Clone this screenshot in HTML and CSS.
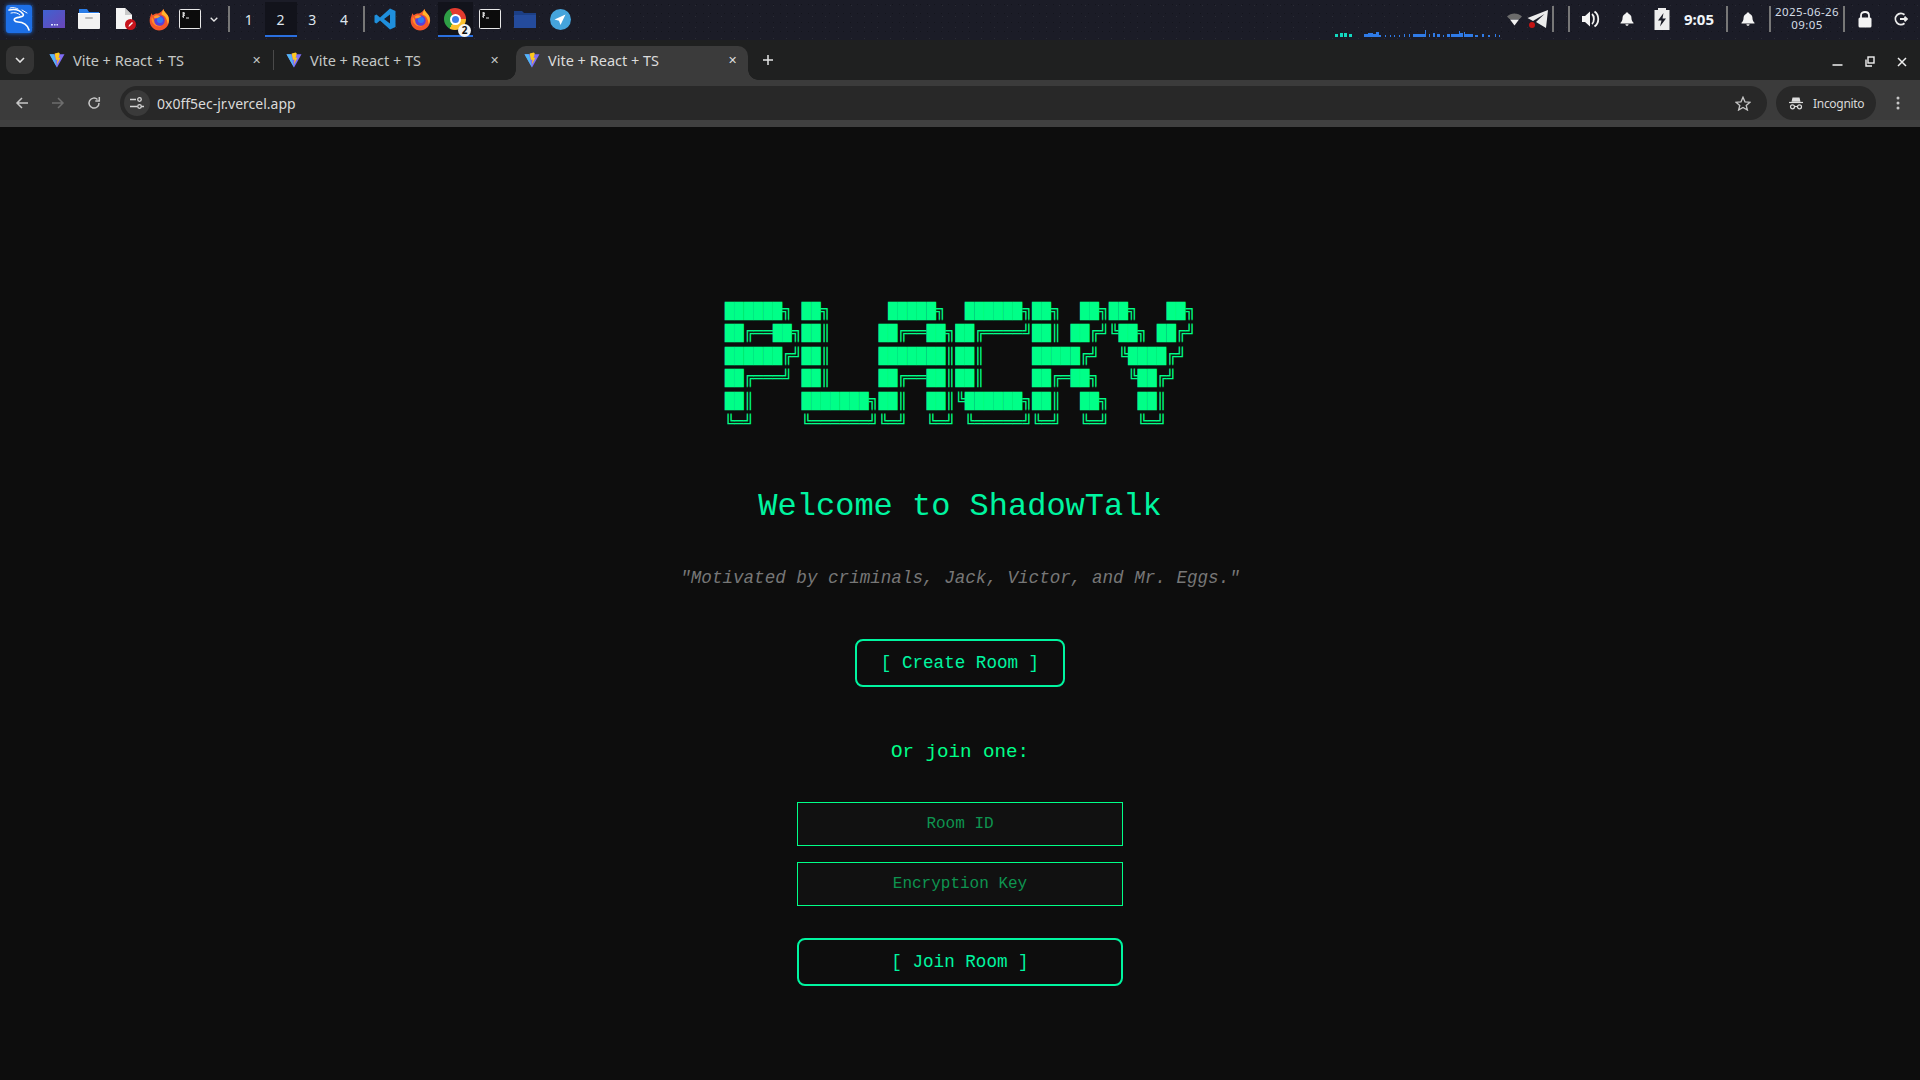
FILE: index.html
```html
<!DOCTYPE html>
<html lang="en">
<head>
    <meta charset="UTF-8">
    <meta name="viewport" content="width=device-width, initial-scale=1.0">
    <title>Vite + React + TS</title>
    <link rel="stylesheet" href="styles.css">
</head>
<body>
    <svg class="sprites" width="0" height="0">
        <symbol id="vite" viewBox="0 0 16 16">
            <path d="M0.5 2.2 L15.5 2.2 L8 15.5 Z" fill="#7f6cf6"/>
            <path d="M0.5 2.2 L5 2.2 L8 15.5 Z" fill="#4fb8f5"/>
            <path d="M9.8 0.5 L5.6 1.6 L7 8 L8.6 7.6 L7.8 12.6 L11.6 5.6 L9.6 6 L10.8 1.6 Z" fill="#fdc81e"/>
        </symbol>
        <symbol id="firefox" viewBox="0 0 22 24">
            <path d="M15 1 C15.5 4 18 5 19.5 7.5 C22 11 21.5 17 18 20.5 C14 24.5 7 24.5 3.500 20.500 C0.500 17 0 12.500 1.500 8.500 L2.500 5.500 L4 7.500 C5.500 6 7.500 5.500 9.500 5.800 C11.500 4.500 14 3.500 15 1 Z" fill="#f5562a"/>
            <path d="M15 1 C15.500 4 18 5 19.500 7.500 C21.500 11 21 15 19.500 17 C19.500 12 17 8 13 6.500 C13.500 4.500 14.500 3 15 1 Z" fill="#ffb52c"/>
            <path d="M3 9 C2 12 3 15 5 17 C7 19 10 20 13 19 C10 19 8 17 6.500 15 Z" fill="#ff8a2a"/>
            <circle cx="11" cy="13" r="5.500" fill="#5a40d8"/>
            <circle cx="11.500" cy="12.500" r="3.200" fill="#2f7bf0"/>
            <path d="M5 9 C7 7 10 7 12 8.500 L9 10.500 L6 11 Z" fill="#ff9a30"/>
        </symbol>
        <symbol id="term" viewBox="0 0 22 20">
            <rect x="0.500" y="0.500" width="21" height="19" rx="1" fill="#0c0c0c" stroke="#e8e8e8"/>
            <path d="M3 4 L6 4 L3.500 6 L6 6 L3 8 M4.500 3 L4.500 9" fill="none" stroke="#e8e8e8" stroke-width="0.800"/>
            <path d="M7 9 L10 9" stroke="#e8e8e8"/>
        </symbol>
        <symbol id="bell" viewBox="0 0 14 14">
            <path d="M7 0.500 C8 0.500 8.400 1 8.500 1.800 C10.500 2.500 11.500 4 11.500 6.500 C11.500 8.500 12.500 9.800 13.500 10.800 L13.500 11.500 L0.500 11.500 L0.500 10.800 C1.500 9.800 2.500 8.500 2.500 6.500 C2.500 4 3.500 2.500 5.500 1.800 C5.600 1 6 0.500 7 0.500 Z M5.400 12.300 L8.600 12.300 C8.400 13.300 7.800 13.800 7 13.800 C6.200 13.800 5.600 13.300 5.400 12.300 Z" fill="#f4f4f4"/>
        </symbol>
    </svg>

    <header class="taskbar">
        <div class="task-group task-apps">
            <div class="kali-btn">
                <svg width="24" height="26" viewBox="0 0 24 26" fill="none" stroke="#fff" stroke-linecap="round">
                    <path d="M2 4 C7 3 13 4 16 8 C18 11 12 11 9 12 C6 13 7 16 11 16 C16 16 21 19 22 24" stroke-width="1.600"/>
                    <path d="M4 7 C8 6 11 7 13 9 M3 2 C6 1 9 2 11 3 M15 4 L20 7" stroke-width="1"/>
                </svg>
            </div>
            <svg class="app-panel" width="22" height="18" viewBox="0 0 22 18">
                <defs><linearGradient id="pg" x1="0" y1="0" x2="1" y2="1"><stop offset="0" stop-color="#3f62d0"/><stop offset="1" stop-color="#6a45b8"/></linearGradient></defs>
                <rect width="22" height="18" fill="url(#pg)"/>
                <path d="M8 14h2v1.500h-2zM11 14h1.500v1.500h-1.500zM13.500 14h1.500v1.500h-1.500z" fill="#dfe6ff"/>
            </svg>
            <svg class="app-files" width="22" height="20" viewBox="0 0 22 20">
                <path d="M1 0 H9 L11 3 H21 V8 H1 Z" fill="#2a7de8"/>
                <rect x="0" y="4" width="22" height="16" rx="1" fill="#f2f2f2"/>
                <rect x="7" y="8" width="8" height="2" rx="1" fill="#b8b8b8"/>
                <path d="M0 4 H22 L22 5 H0 Z" fill="#fff"/>
            </svg>
            <svg class="app-doc" width="22" height="24" viewBox="0 0 22 24">
                <path d="M1 1 H10 L17 8 V22 H1 Z" fill="#f5f5f5"/>
                <path d="M10 1 L17 8 H10 Z" fill="#c9c9c9"/>
                <circle cx="15.500" cy="17.500" r="5.500" fill="#c8141c"/>
                <path d="M13.500 20 L14 18 L17 15 L18 16 L15 19 Z" fill="#fff"/>
            </svg>
            <svg class="app-fox" width="21" height="23"><use href="#firefox"/></svg>
            <svg class="app-term" width="22" height="20"><use href="#term"/></svg>
            <svg class="app-chevron" width="8" height="5" viewBox="0 0 8 5"><path d="M0.700 0.700 L4 4 L7.300 0.700" fill="none" stroke="#e6e6e6" stroke-width="1.300"/></svg>
            <span class="bar-sep"></span>
        </div>

        <div class="workspaces">
            <span class="ws">1</span>
            <span class="ws ws-active">2</span>
            <span class="ws">3</span>
            <span class="ws">4</span>
        </div>
        <span class="bar-sep sep-mid"></span>

        <div class="task-group task-running">
            <svg class="run-code" width="22" height="22" viewBox="0 0 22 22">
                <path d="M16 0.500 L21.500 3 V19 L16 21.500 L6 12.500 L2.500 15.500 L0.500 14.500 V7.500 L2.500 6.500 L6 9.500 Z M16 6.500 L10 11 L16 15.500 Z" fill="#1f8fdc" fill-rule="evenodd"/>
            </svg>
            <svg class="run-fox" width="21" height="23"><use href="#firefox"/></svg>
            <div class="run-chrome">
                <div class="chrome-logo"><div class="chrome-dot"></div></div>
                <span class="chrome-count">2</span>
            </div>
            <svg class="run-term" width="22" height="20"><use href="#term"/></svg>
            <svg class="run-folder" width="22" height="18" viewBox="0 0 22 18">
                <path d="M0 1 H8 L10 3 H22 V18 H0 Z" fill="#1c3f85"/>
                <path d="M0 5 H22 V18 H0 Z" fill="#244b9c"/>
            </svg>
            <svg class="run-tg" width="21" height="21" viewBox="0 0 21 21">
                <circle cx="10.500" cy="10.500" r="10.500" fill="#45a4dc"/>
                <path d="M15.500 5.500 L4.500 10.500 L9 11.800 L10.500 16 Z" fill="#fff"/>
            </svg>
        </div>

        <svg class="net-graph" width="190" height="8" viewBox="0 0 190 8">
            <path d="M0 5h3v3h-3zM5 4h3v4h-3zM9 4h3v4h-3zM14 5h3v3h-3z" fill="#12d8c0"/>
            <path d="M29 5h4v3h-4zM33 4h5v4h-5zM38 5h3v3h-3zM41 3h3v5h-3zM44 6h2v2h-2zM50 6h1v2h-1zM55 6h1v2h-1zM59 6h1v2h-1zM64 6h1v2h-1zM69 5h1v3h-1zM74 5h1v3h-1zM78 5h12v3h-12zM90 1h1v7h-1zM94 5h1v3h-1zM98 4h2v4h-2zM102 5h3v3h-3zM108 6h1v2h-1zM112 5h3v3h-3zM116 5h8v3h-8zM124 2h1v6h-1zM125 4h3v4h-3zM129 3h1v5h-1zM130 5h8v3h-8zM140 6h3v2h-3zM147 5h2v3h-2zM153 6h2v2h-2zM160 5h1v3h-1zM164 6h1v2h-1z" fill="#2f7be8"/>
        </svg>

        <div class="tray">
            <svg class="tray-wifi" width="15" height="13" viewBox="0 0 15 13">
                <path d="M0 3.500 C4 -0.500 11 -0.500 15 3.500 L12.500 6 H2.500 Z" fill="#6b6b6b"/>
                <path d="M3 6.500 H12 L7.500 12.500 Z" fill="#f2f2f2"/>
            </svg>
            <svg class="tray-tg" width="22" height="20" viewBox="0 0 22 20">
                <path d="M21 1 L0.500 9 L6 12 L17.500 5 L9 13 L19 19 Z" fill="#ececec"/>
                <circle cx="5" cy="16" r="3" fill="#c41414"/>
            </svg>
            <span class="bar-sep tray-sep-a"></span>
            <span class="bar-sep tray-sep-b"></span>
            <svg class="tray-vol" width="18" height="18" viewBox="0 0 18 18">
                <path d="M0 6 H3 L8 1.500 V16.500 L3 12 H0 Z" fill="#f4f4f4"/>
                <path d="M10 4 C12.500 6 12.500 12 10 14 M12.500 1.500 C17.500 5 17.500 13 12.500 16.500" fill="none" stroke="#f4f4f4" stroke-width="1.800"/>
            </svg>
            <svg class="tray-bell-a" width="14" height="14"><use href="#bell"/></svg>
            <svg class="tray-bat" width="16" height="22" viewBox="0 0 16 22">
                <path d="M4 0 H12 V2 H15.500 V22 H0.500 V2 H4 Z M9.500 5 L4 12.500 H7.500 L6 18.500 L12 10.500 H8.500 Z" fill="#ededed" fill-rule="evenodd"/>
            </svg>
            <span class="tray-time">9:05</span>
            <span class="bar-sep tray-sep-c"></span>
            <svg class="tray-bell-b" width="14" height="14"><use href="#bell"/></svg>
            <span class="bar-sep tray-sep-d"></span>
            <div class="tray-date"><span>2025-06-26</span><span>09:05</span></div>
            <span class="bar-sep tray-sep-e"></span>
            <svg class="tray-lock" width="14" height="17" viewBox="0 0 14 17">
                <path d="M3 7 V4.500 C3 2 4.800 1 7 1 C9.200 1 11 2 11 4.500 V7" fill="none" stroke="#f4f4f4" stroke-width="1.800"/>
                <rect x="0.500" y="6.500" width="13" height="10" rx="1.500" fill="#f4f4f4"/>
            </svg>
            <svg class="tray-power" width="14" height="14" viewBox="0 0 14 14" fill="none" stroke="#ececec" stroke-width="1.800">
                <path d="M10.500 2.800 A5.500 5.500 0 1 0 10.500 11.200"/>
                <path d="M6 7 H13 M10.500 4.800 L13 7 L10.500 9.200"/>
            </svg>
        </div>
    </header>

    <div class="tabstrip">
        <button class="tab-search">
            <svg width="10" height="6" viewBox="0 0 10 6"><path d="M1 1 L5 5 L9 1" fill="none" stroke="#e3e3e3" stroke-width="1.600"/></svg>
        </button>
        <div class="tab tab-first">
            <svg class="favicon" width="16" height="16"><use href="#vite"/></svg>
            <span class="tab-title">Vite + React + TS</span>
            <span class="tab-close">&#x2715;</span>
        </div>
        <span class="tab-sep"></span>
        <div class="tab">
            <svg class="favicon" width="16" height="16"><use href="#vite"/></svg>
            <span class="tab-title">Vite + React + TS</span>
            <span class="tab-close">&#x2715;</span>
        </div>
        <div class="tab tab-active">
            <svg class="favicon" width="16" height="16"><use href="#vite"/></svg>
            <span class="tab-title">Vite + React + TS</span>
            <span class="tab-close">&#x2715;</span>
        </div>
        <svg class="tab-new" width="12" height="12" viewBox="0 0 12 12"><path d="M6 1 V11 M1 6 H11" stroke="#e3e3e3" stroke-width="1.500"/></svg>
        <div class="win-controls">
            <svg width="11" height="11" viewBox="0 0 11 11"><path d="M0.500 9 H10.500" stroke="#f0f0f0" stroke-width="1.500"/></svg>
            <svg width="10" height="11" viewBox="0 0 10 11" fill="none" stroke="#f0f0f0" stroke-width="1.400"><rect x="3" y="1" width="6" height="6"/><path d="M1 3.500 V10 H7"/></svg>
            <svg width="10" height="10" viewBox="0 0 10 10"><path d="M1 1 L9 9 M9 1 L1 9" stroke="#f0f0f0" stroke-width="1.500"/></svg>
        </div>
    </div>

    <div class="toolbar">
        <svg class="nav-icon" width="14" height="14" viewBox="0 0 14 14" fill="none" stroke="#c7c7c7" stroke-width="1.500"><path d="M13 7 H2 M7 2 L2 7 L7 12"/></svg>
        <svg class="nav-icon nav-off" width="14" height="14" viewBox="0 0 14 14" fill="none" stroke="#6e6e6e" stroke-width="1.500"><path d="M1 7 H12 M7 2 L12 7 L7 12"/></svg>
        <svg class="nav-icon" width="14" height="14" viewBox="0 0 14 14" fill="none" stroke="#c7c7c7" stroke-width="1.500"><path d="M12 7 A5 5 0 1 1 10.500 3.500"/><path d="M12.300 1 V5 H8.300"/></svg>
        <div class="omnibox">
            <span class="site-info">
                <svg width="14" height="12" viewBox="0 0 14 12" fill="none" stroke="#d5d5d5" stroke-width="1.300"><path d="M0 2.500 H6 M11 9.500 H14 M0 9.500 H7"/><circle cx="9.500" cy="2.500" r="1.800"/><circle cx="9.500" cy="9.500" r="1.800"/></svg>
            </span>
            <span class="url">0x0ff5ec-jr.vercel.app</span>
            <svg class="star" width="16" height="15" viewBox="0 0 16 15"><path d="M8 1.200 L10 5.800 L15 6.200 L11.200 9.500 L12.400 14 L8 11.500 L3.600 14 L4.800 9.500 L1 6.200 L6 5.800 Z" fill="none" stroke="#c7c7c7" stroke-width="1.300"/></svg>
        </div>
        <div class="incognito">
            <svg width="14" height="14" viewBox="0 0 14 14" fill="none" stroke="#dcdcdc" stroke-width="1.200"><path d="M3.500 1.500 H10.500 L11.500 5.800 H2.500 Z" fill="#dcdcdc" stroke="none"/><path d="M0 6.500 H14"/><circle cx="3.500" cy="10.800" r="2"/><circle cx="10.500" cy="10.800" r="2"/><path d="M5.500 10.500 H8.500"/></svg>
            <span>Incognito</span>
        </div>
        <svg class="menu-dots" width="4" height="14" viewBox="0 0 4 14"><circle cx="2" cy="2" r="1.500" fill="#c7c7c7"/><circle cx="2" cy="7" r="1.500" fill="#c7c7c7"/><circle cx="2" cy="12" r="1.500" fill="#c7c7c7"/></svg>
    </div>

    <main class="home">
<pre class="ascii-logo">██████╗ ██╗      █████╗  ██████╗██╗  ██╗██╗   ██╗
██╔══██╗██║     ██╔══██╗██╔════╝██║ ██╔╝╚██╗ ██╔╝
██████╔╝██║     ███████║██║     █████╔╝  ╚████╔╝ 
██╔═══╝ ██║     ██╔══██║██║     ██╔═██╗   ╚██╔╝  
██║     ███████╗██║  ██║╚██████╗██║  ██╗   ██║   
╚═╝     ╚══════╝╚═╝  ╚═╝ ╚═════╝╚═╝  ╚═╝   ╚═╝   </pre>
        <h1 class="welcome">Welcome to ShadowTalk</h1>
        <p class="quote">"Motivated by criminals, Jack, Victor, and Mr. Eggs."</p>
        <button class="term-btn">[ Create Room ]</button>
        <h3 class="join-label">Or join one:</h3>
        <div class="join-form">
            <input class="term-input" type="text" placeholder="Room ID">
            <input class="term-input" type="text" placeholder="Encryption Key">
            <button class="term-btn join-btn">[ Join Room ]</button>
        </div>
    </main>
</body>
</html>
```

FILE: styles.css
```css
:root {
    --green: #00ff88;
    --accent: #00f5a0;
    --page: #0d0d0d;
    --bar: #1b1c27;
    --strip: #1f2020;
    --tool: #3b3b3b;
    --pill: #282828;
}
* {
    box-sizing: border-box;
}
html, body {
    height: 100%;
}
body {
    margin: 0;
    background: var(--page);
    font-family: 'Noto Sans', sans-serif;
    display: flex;
    flex-direction: column;
    overflow: hidden;
}
.sprites {
    position: absolute;
}

/* desktop panel */
.taskbar {
    height: 40px;
    flex: none;
    padding-bottom: 2px;
    background-color: var(--bar);
    background-image:
        radial-gradient(circle, rgba(255, 255, 255, 0.07) 0.5px, transparent 1px),
        radial-gradient(circle, rgba(0, 0, 0, 0.25) 0.5px, transparent 1px);
    background-size: 13px 11px, 7px 9px;
    display: flex;
    align-items: center;
    position: relative;
    color: #e8e8e8;
}
.task-group {
    display: flex;
    align-items: center;
}
.kali-btn {
    width: 26px;
    height: 28px;
    margin-left: 6px;
    background: #1d6fe6;
    border-radius: 3px;
    box-shadow: 0 0 4px #1d6fe6;
    display: flex;
    align-items: center;
    justify-content: center;
}
.app-panel { margin-left: 11px; }
.app-files { margin-left: 13px; }
.app-doc { margin-left: 15px; }
.app-fox { margin-left: 12px; }
.app-term { margin-left: 9px; }
.app-chevron { margin-left: 9px; }
.bar-sep {
    width: 2px;
    height: 26px;
    background: #777;
    flex: none;
}
.task-apps .bar-sep { margin-left: 10px; }
.workspaces {
    display: flex;
    align-self: flex-start;
    margin-top: 2px;
    margin-left: 3px;
    height: 35px;
}
.ws {
    width: 32px;
    font-size: 14px;
    line-height: 35px;
    text-align: center;
    margin-left: -0.25px;
    color: #dfe6ee;
}
.ws-active {
    background: #12131b;
    border-bottom: 2px solid #2a6fe0;
}
.sep-mid { margin-left: 3px; }
.task-running {
    margin-left: 9px;
    align-self: stretch;
}
.run-fox { margin-left: 14px; }
.run-chrome {
    width: 35px;
    height: 35px;
    margin-left: 7px;
    align-self: flex-start;
    margin-top: 2px;
    background: #12131b;
    border-bottom: 2px solid #2a6fe0;
    position: relative;
    padding: 6px 0 0 6px;
}
.chrome-logo {
    width: 22px;
    height: 22px;
    border-radius: 50%;
    background: conic-gradient(#e33b2e 0 90deg, #fbc02d 90deg 210deg, #2e9e46 210deg 330deg, #e33b2e 330deg);
    display: flex;
    align-items: center;
    justify-content: center;
}
.chrome-dot {
    width: 11px;
    height: 11px;
    border-radius: 50%;
    background: #3b7de8;
    border: 2px solid #fff;
}
.chrome-count {
    position: absolute;
    right: 2px;
    top: 22px;
    width: 13px;
    height: 13px;
    border-radius: 50%;
    background: #f4f4f4;
    color: #111;
    font-size: 10px;
    font-weight: 700;
    line-height: 13px;
    text-align: center;
}
.run-term { margin-left: 6px; }
.run-folder { margin-left: 13px; }
.run-tg { margin-left: 14px; }
.net-graph {
    position: absolute;
    left: 1335px;
    top: 29px;
}
.tray {
    margin-left: auto;
    display: flex;
    align-items: center;
}
.tray-tg { margin-left: 5px; }
.tray-sep-a { margin-left: 3px; }
.tray-sep-b { margin-left: 14px; }
.tray-vol { margin-left: 12px; }
.tray-bell-a { margin-left: 20px; }
.tray-bat { margin-left: 20px; }
.tray-time {
    margin-left: 14px;
    font-size: 15px;
    font-weight: 700;
    color: #f0f4f8;
}
.tray-sep-c { margin-left: 12px; }
.tray-bell-b { margin-left: 13px; }
.tray-sep-d { margin-left: 14px; }
.tray-date {
    width: 72px;
    display: flex;
    flex-direction: column;
    align-items: center;
    font-size: 11.5px;
    line-height: 13px;
    color: #d4dce6;
    letter-spacing: 0.4px;
    margin-top: -2px;
}
.tray-lock { margin-left: 13px; }
.tray-power { margin-left: 22px; margin-right: 12px; }

/* browser chrome */
.tabstrip {
    height: 40px;
    flex: none;
    background: var(--strip);
    display: flex;
    align-items: flex-end;
    position: relative;
}
.tab-search {
    width: 28px;
    height: 28px;
    margin: 0 3px 6px 6px;
    border: 0;
    border-radius: 8px;
    background: #343434;
    display: flex;
    align-items: center;
    justify-content: center;
    padding: 0;
}
.tab {
    width: 237px;
    height: 34px;
    padding: 0 10px 7px 12px;
    display: flex;
    align-items: center;
    gap: 8px;
    color: #c4c7c5;
    font-size: 14.5px;
    position: relative;
}
.tab-first { width: 236px; }
.tab-title {
    flex: 1;
}
.tab-close {
    width: 14px;
    font-size: 11px;
    text-align: center;
}
.tab-sep {
    width: 1px;
    height: 20px;
    margin-bottom: 10px;
    background: #4a4a4a;
    flex: none;
}
.tab-active {
    width: 232px;
    margin-left: 5px;
    padding: 0 9px 7px 8px;
    background: var(--tool);
    color: #dcdcdc;
    border-radius: 10px 10px 0 0;
}
.tab-active::before,
.tab-active::after {
    content: "";
    position: absolute;
    bottom: 0;
    width: 10px;
    height: 10px;
}
.tab-active::before {
    left: -10px;
    background: radial-gradient(circle at 0 0, transparent 9.5px, var(--tool) 10px);
}
.tab-active::after {
    right: -10px;
    background: radial-gradient(circle at 100% 0, transparent 9.5px, var(--tool) 10px);
}
.tab-new {
    margin: 0 0 14px 14px;
}
.win-controls {
    margin-left: auto;
    margin-right: 13px;
    margin-bottom: 13px;
    display: flex;
    align-items: center;
    gap: 22px;
}
.toolbar {
    height: 47px;
    flex: none;
    background: var(--tool);
    border-bottom: 7px solid #404040;
    padding-top: 6px;
    display: flex;
    align-items: center;
}
.nav-icon { margin-left: 15px; margin-right: 7px; }
.nav-off { margin-left: 15px; }
.omnibox {
    width: 1647px;
    height: 34px;
    margin-left: 12px;
    border-radius: 17px;
    background: var(--pill);
    display: flex;
    align-items: center;
    padding-left: 4px;
}
.site-info {
    width: 26px;
    height: 26px;
    border-radius: 50%;
    background: #3a3a3a;
    display: flex;
    align-items: center;
    justify-content: center;
}
.url {
    margin-left: 7px;
    font-size: 14px;
    color: #dadada;
}
.star { margin-left: auto; margin-right: 16px; }
.incognito {
    width: 100px;
    height: 34px;
    margin-left: 9px;
    border-radius: 17px;
    background: var(--pill);
    color: #d8d8d8;
    font-size: 12px;
    letter-spacing: -0.3px;
    display: flex;
    align-items: center;
    gap: 10px;
    padding-left: 13px;
}
.menu-dots { margin-left: 20px; }

/* the page itself */
.home {
    flex: 1;
    background: var(--page);
    color: var(--green);
    font-family: 'Liberation Mono', 'Courier New', monospace;
    display: flex;
    flex-direction: column;
    align-items: center;
    padding-top: 173px;
}
.ascii-logo {
    margin: 0;
    font-family: inherit;
    font-size: 16px;
    line-height: 1.4;
    text-shadow: 0 1px 0 rgba(0, 255, 136, 0.3);
}
.welcome {
    margin: 54px 0 0;
    font-size: 32px;
    font-weight: 400;
    line-height: 37px;
    color: var(--accent);
}
.quote {
    margin: 43px 0 0;
    font-size: 17.6px;
    line-height: 20px;
    font-style: italic;
    color: #777;
}
.term-btn {
    height: 48px;
    padding: 0 24px;
    border: 2px solid var(--accent);
    border-radius: 8px;
    background: transparent;
    color: var(--accent);
    font-family: inherit;
    font-size: 17.6px;
    margin-top: 51px;
}
.join-label {
    margin: 54px 0 0;
    font-size: 19.2px;
    font-weight: 400;
    line-height: 22px;
}
.join-form {
    width: 326px;
    margin-top: 39px;
    display: flex;
    flex-direction: column;
}
.term-input {
    height: 44px;
    margin-bottom: 16px;
    border: 1px solid var(--green);
    background: #111;
    color: var(--green);
    font-family: inherit;
    font-size: 16px;
    text-align: center;
    padding: 0;
}
.term-input::placeholder {
    color: #0e9450;
    opacity: 1;
}
.join-btn {
    margin-top: 16px;
}
```
